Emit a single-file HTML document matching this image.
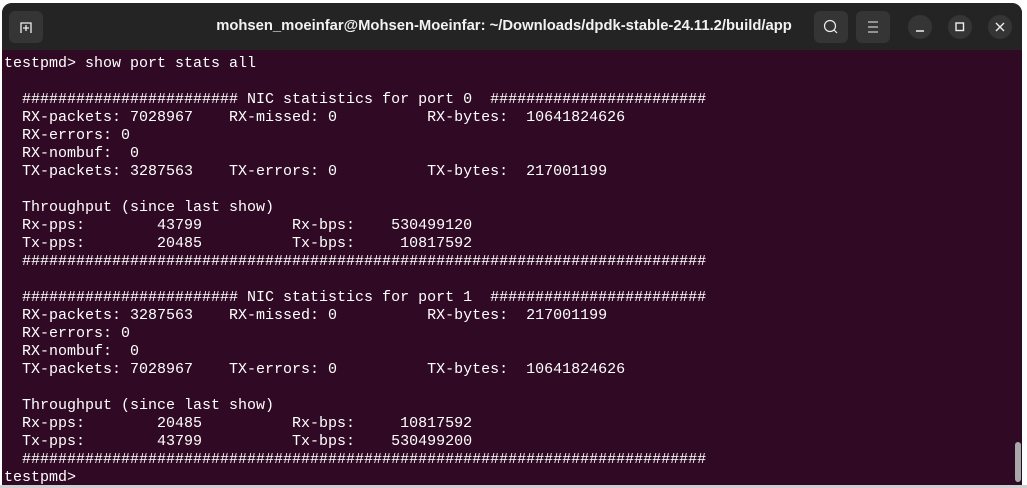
<!DOCTYPE html>
<html><head><meta charset="utf-8">
<style>
html,body{margin:0;padding:0;width:1027px;height:488px;overflow:hidden;background:#fff;}
.bot{position:absolute;left:0;top:485px;width:1027px;height:3px;background:#cfcfcf;}
.win{position:absolute;left:2px;top:3px;width:1020px;height:482px;background:#300a24;border-radius:10px 10px 0 0;overflow:hidden;}
.tb{position:absolute;left:0;top:0;width:1020px;height:47px;background:#242424;}
.title{position:absolute;left:0;right:16px;top:15px;text-align:center;color:#f2f2f2;font:bold 14.8px "Liberation Sans",sans-serif;}
.btn{position:absolute;top:8px;width:34px;height:32px;background:#353535;border-radius:6px;}
.circ{position:absolute;top:12px;width:24px;height:24px;border-radius:12px;background:#353535;}
pre{position:absolute;left:2px;top:52px;margin:0;color:#ffffff;font:15px/18px "Liberation Mono",monospace;white-space:pre;}
.sb{position:absolute;left:1013px;top:439px;width:6px;height:40px;background:#a8a8a8;border-radius:3px;}
</style></head><body>
<div class="win">
<div class="tb">
  <div class="btn" style="left:7px;"><svg width="34" height="32"><path d="M12 22 V12 H22 V22 M17 14 V20 M14 17 H20" stroke="#eee" stroke-width="1.3" fill="none"/></svg></div>
  <div class="title">mohsen_moeinfar@Mohsen-Moeinfar: ~/Downloads/dpdk-stable-24.11.2/build/app</div>
  <div class="btn" style="left:812px;"><svg width="34" height="32"><circle cx="16" cy="15" r="5.5" stroke="#eee" stroke-width="1.2" fill="none"/><path d="M20 19 L23 22" stroke="#eee" stroke-width="1.2"/></svg></div>
  <div class="btn" style="left:854px;"><svg width="34" height="32"><path d="M12 11 H22 M12 16 H22 M12 21 H22" stroke="#eee" stroke-width="1.1"/></svg></div>
  <div class="circ" style="left:906px;"><svg width="24" height="24"><path d="M8 16 H16" stroke="#eee" stroke-width="1.4"/></svg></div>
  <div class="circ" style="left:946px;"><svg width="24" height="24"><rect x="8" y="8" width="7.5" height="7.5" stroke="#eee" stroke-width="1.4" fill="none"/></svg></div>
  <div class="circ" style="left:986px;"><svg width="24" height="24"><path d="M8 8 L16 16 M16 8 L8 16" stroke="#eee" stroke-width="1.4"/></svg></div>
</div>
<pre>testpmd&gt; show port stats all

  ######################## NIC statistics for port 0  ########################
  RX-packets: 7028967    RX-missed: 0          RX-bytes:  10641824626
  RX-errors: 0
  RX-nombuf:  0
  TX-packets: 3287563    TX-errors: 0          TX-bytes:  217001199

  Throughput (since last show)
  Rx-pps:        43799          Rx-bps:    530499120
  Tx-pps:        20485          Tx-bps:     10817592
  ############################################################################

  ######################## NIC statistics for port 1  ########################
  RX-packets: 3287563    RX-missed: 0          RX-bytes:  217001199
  RX-errors: 0
  RX-nombuf:  0
  TX-packets: 7028967    TX-errors: 0          TX-bytes:  10641824626

  Throughput (since last show)
  Rx-pps:        20485          Rx-bps:     10817592
  Tx-pps:        43799          Tx-bps:    530499200
  ############################################################################
testpmd&gt;</pre>
<div class="sb"></div>
</div>
<div class="bot"></div>
</body></html>
